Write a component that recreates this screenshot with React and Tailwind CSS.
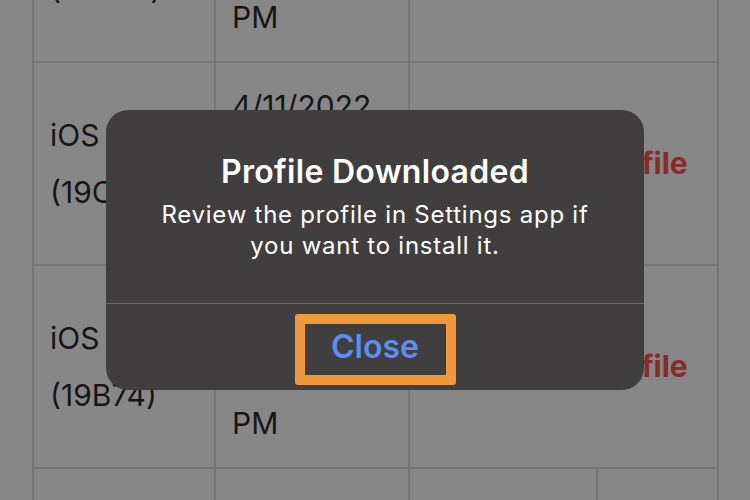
const rows = [
  { os: 'iOS 15.3', build: '(19D50)', date: ['4/11/2022', '3:12:05', 'PM'] },
  { os: 'iOS', build: '(19C56)', date: ['4/11/2022', '3:14:22', 'PM'] },
  { os: 'iOS', build: '(19B74)', date: ['4/11/2022', '3:15:40', 'PM'] },
];

const Cell = ({ className = '', children }) => (
  <div className={`flex flex-col justify-center border-r-2 border-[#757575] pl-4 ${className}`}>{children}</div>
);

export default function App() {
  return (
    <div
      className="relative h-[500px] w-[750px] overflow-hidden bg-[#878787] text-[30px] leading-[57px] text-[#161616]"
      style={{ fontFamily: 'Inter, "Noto Sans", sans-serif' }}
    >
      {/* table behind the alert */}
      <div className="-mt-[140px] ml-[32px] w-[687px] border-l-2 border-[#757575]">
        {rows.map((r, i) => (
          <div key={i} className="flex h-[203px] border-b-2 border-[#757575]">
            <Cell className="w-[182px]">
              <span>{r.os}</span>
              <span>{r.build}</span>
            </Cell>
            <Cell className="w-[194px]">
              {r.date.map((d) => (
                <span key={d}>{d}</span>
              ))}
            </Cell>
            <Cell className="w-[309px] pl-[28px]">
              <span className="font-bold text-[#872b2b]">Download Profile</span>
            </Cell>
          </div>
        ))}
        <div className="flex h-[60px]">
          <Cell className="w-[182px]" />
          <Cell className="w-[194px]" />
          <Cell className="w-[188px]" />
          <Cell className="w-[121px]" />
        </div>
      </div>

      {/* alert */}
      <div className="absolute inset-0 flex items-center justify-center">
        <div className="flex h-[280px] w-[538px] flex-col rounded-[22px] bg-[#403e3f] text-white">
          <div className="px-10 pt-[44px] pb-[42px] text-center">
            <h2 className="text-[32px] leading-[36px] font-semibold tracking-[0.3px]">Profile Downloaded</h2>
            <p className="mt-[9px] text-[24px] leading-[31px] tracking-[0.75px]">
              Review the profile in Settings app if you want to install it.
            </p>
          </div>
          <div className="h-px bg-[#6a6a6a]" />
          <div className="flex flex-1 items-center justify-center">
            <span className="mt-[4px] flex h-[71px] w-[161px] items-center justify-center rounded-[3px] border-[10px] border-[#f0993a] pb-[4px] text-[32px] leading-none font-semibold text-[#5b8ef0]">
              Close
            </span>
          </div>
        </div>
      </div>
    </div>
  );
}
